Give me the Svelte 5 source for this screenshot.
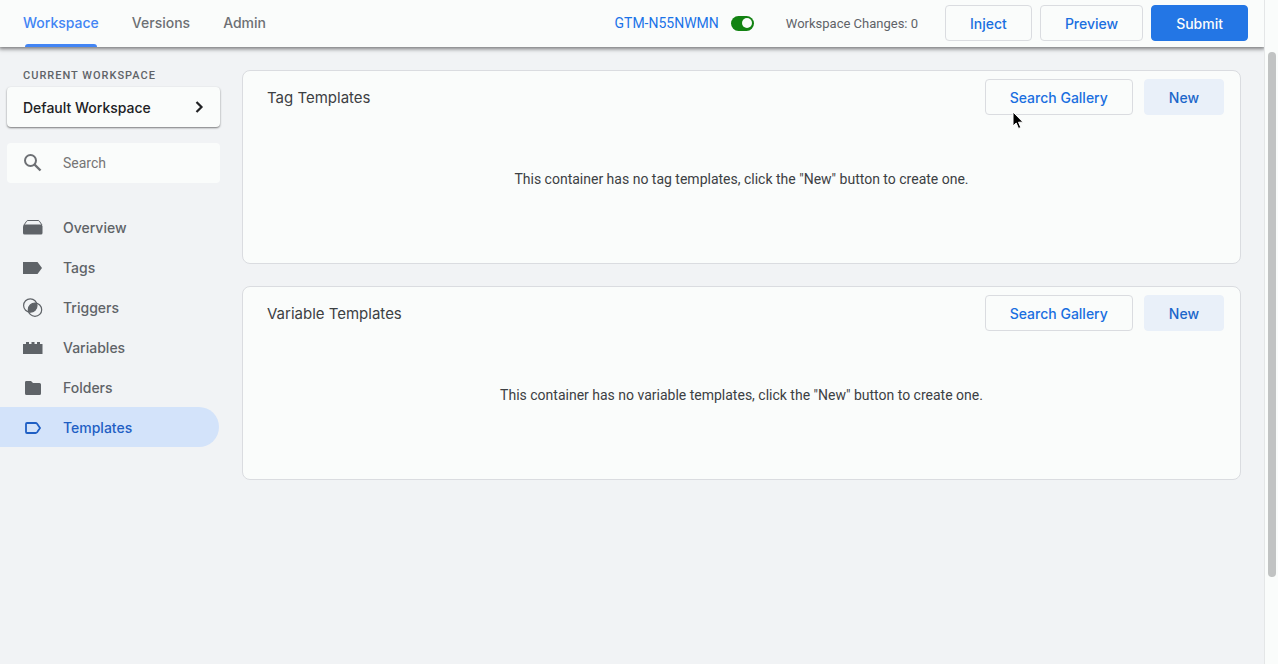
<script>
  let search = $state('');
  let active = $state('Templates');
  let connected = $state(true);

  const tabs = ['Workspace', 'Versions', 'Admin'];

  const navItems = ['Overview', 'Tags', 'Triggers', 'Variables', 'Folders', 'Templates'];

  const sections = [
    { title: 'Tag Templates', kind: 'tag' },
    { title: 'Variable Templates', kind: 'variable' }
  ];
</script>

<div class="page">
  <div class="app">
    <header class="topbar">
      <nav class="tabs">
        {#each tabs as tab, i}
          <a class="tab" class:current={i === 0} href="#{tab.toLowerCase()}">{tab}</a>
        {/each}
      </nav>

      <div class="status">
        <a class="container-id" href="#container">GTM-N55NWMN</a>
        <input class="toggle" type="checkbox" aria-label="Injection enabled" bind:checked={connected} />
        <span class="changes">Workspace Changes: 0</span>
      </div>

      <div class="actions">
        <button class="btn">Inject</button>
        <button class="btn">Preview</button>
        <button class="btn primary">Submit</button>
      </div>
    </header>

    <div class="body">
      <aside class="sidebar">
        <div class="caption">CURRENT WORKSPACE</div>
        <button class="workspace">
          <span>Default Workspace</span>
          <svg width="10" height="14" viewBox="0 0 10 14">
            <path d="M2.500 2l5 5-5 5" fill="none" stroke="currentColor" stroke-width="2.2" />
          </svg>
        </button>

        <label class="search">
          <svg width="20" height="20" viewBox="0 0 20 20">
            <circle cx="7.5" cy="7.5" r="5.5" fill="none" stroke="currentColor" stroke-width="2" />
            <path d="M11.5 11.5l6 6" fill="none" stroke="currentColor" stroke-width="2.4" />
          </svg>
          <input type="text" placeholder="Search" aria-label="Search" bind:value={search} />
        </label>

        <nav class="nav">
          {#each navItems as item}
            <a
              class="nav-item"
              class:active={active === item}
              href="#{item.toLowerCase()}"
              onclick={() => (active = item)}
            >
              <svg width="20" height="20" viewBox="0 0 20 20" fill="currentColor">
                {#if item === 'Overview'}
                  <path d="M1 8L3.6 4.2Q4 3.5 5 3.5h10q1 0 1.4.7L19 8" fill="none" stroke="currentColor" />
                  <path d="M0 9.500Q0 7.500 2 7.500h15.500q2 0 2 2V16q0 1.500-1.500 1.500H1.500Q0 17.500 0 16z" />
                {:else if item === 'Tags'}
                  <path d="M0 5h14.5l4.500 6-4.500 6H0z" />
                {:else if item === 'Triggers'}
                  <circle cx="7.3" cy="8.5" r="6.7" fill="none" stroke="currentColor" stroke-width="1.2" />
                  <circle cx="12" cy="12.7" r="6.7" fill="none" stroke="currentColor" stroke-width="1.2" />
                  <path d="M13.6 6.2A6.7 6.7 0 0 1 5.7 15A6.7 6.7 0 0 1 13.6 6.2z" />
                {:else if item === 'Variables'}
                  <path d="M0 17V7h3V5h3v2h2.500V5h3v2H14V5h3v2h2.500v10z" />
                {:else if item === 'Folders'}
                  <path d="M3 4h5l2 2h6.500A1.500 1.500 0 0 1 18 7.500v9a1.500 1.500 0 0 1-1.500 1.500h-13A1.500 1.500 0 0 1 2 16.500V5.500A1.500 1.500 0 0 1 3 4z" />
                {:else}
                  <path
                    d="M4 6h8.500a2 2 0 0 1 1.600.8L17 11l-2.900 4.200a2 2 0 0 1-1.600.8H4a1 1 0 0 1-1-1V7a1 1 0 0 1 1-1z"
                    fill="none"
                    stroke="currentColor"
                    stroke-width="1.8"
                  />
                {/if}
              </svg>
              <span>{item}</span>
            </a>
          {/each}
        </nav>
      </aside>

      <main class="content">
        {#each sections as section, i}
          <section class="card">
            <div class="card-head">
              <h2>{section.title}</h2>
              <div class="card-actions">
                <button class="btn">Search Gallery</button>
                <button class="btn tonal">New</button>
                {#if i === 0}
                  <svg class="pointer" width="12" height="20" viewBox="0 0 12 20">
                    <path d="M1 1v14l3.200-3 2.300 5.500 2.300-1-2.300-5.300H11z" fill="#000" stroke="#fff" />
                  </svg>
                {/if}
              </div>
            </div>
            <p class="empty">
              This container has no {section.kind} templates, click the "New" button to create one.
            </p>
          </section>
        {/each}
      </main>
    </div>
  </div>

  <div class="scroll-track">
    <div class="scroll-thumb"></div>
  </div>
</div>

<style>
  :global(body) {
    margin: 0;
    background: #f1f3f5;
  }

  .page {
    display: flex;
    min-height: 100vh;
    font-family: Inter, 'Noto Sans', sans-serif;
    font-size: 14px;
    font-weight: 500;
    color: #5f6368;
  }

  .page *,
  .page {
    box-sizing: border-box;
  }

  a {
    color: inherit;
    text-decoration: none;
  }

  .app {
    flex: 1;
    min-width: 0;
  }

  .topbar {
    display: flex;
    align-items: center;
    height: 47px;
    padding: 0 16px 0 23px;
    background: #fafcfb;
    box-shadow: 0 1px 4px 1px rgba(0, 0, 0, 0.5);
  }

  .tabs {
    display: flex;
    align-self: stretch;
    gap: 33px;
    margin-right: auto;
  }

  .tab {
    display: flex;
    flex-direction: column;
    line-height: 46px;
    color: #6d7074;
  }

  .tab.current {
    color: #4285f4;
  }

  .tab.current::after {
    content: '';
    height: 3px;
    margin: -2px 2px 0;
    border-radius: 3px 3px 0 0;
    background: #4285f4;
  }

  .status {
    display: flex;
    align-items: center;
    margin-right: 27px;
    padding-bottom: 1px;
    font-family: Roboto, sans-serif;
    font-weight: 400;
  }

  .container-id {
    color: #1a73e8;
  }

  .changes {
    font-size: 13px;
  }

  .toggle {
    appearance: none;
    display: flex;
    align-items: center;
    width: 23px;
    height: 15px;
    margin: 0 32px 0 12px;
    padding: 0 2px;
    border-radius: 8px;
    background: #9aa0a6;
  }

  .toggle::before {
    content: '';
    width: 10px;
    height: 10px;
    border-radius: 50%;
    background: #fafcfb;
  }

  .toggle:checked {
    justify-content: flex-end;
    background: #128212;
  }

  .actions {
    display: flex;
    gap: 8px;
    padding-bottom: 1px;
  }

  .btn {
    height: 36px;
    padding: 0 24px;
    border: 1px solid #dadce0;
    border-radius: 4px;
    background: #fafcfb;
    color: #1a6fe0;
    font: inherit;
    white-space: nowrap;
  }

  .btn.primary {
    border-color: #2376e5;
    background: #2376e5;
    color: #fafcfb;
  }

  .btn.tonal {
    border-color: #e9f0f9;
    background: #e9f0f9;
    color: #1b66ca;
  }

  .body {
    display: flex;
    gap: 22px;
    padding-right: 23px;
  }

  .sidebar {
    flex: none;
    width: 220px;
    padding-top: 20px;
  }

  .caption {
    padding-left: 23px;
    font-family: Roboto, sans-serif;
    font-size: 11px;
    line-height: 18px;
    letter-spacing: 1px;
  }

  .workspace {
    display: flex;
    align-items: center;
    justify-content: space-between;
    width: 213px;
    height: 40px;
    margin: 2px 0 16px 7px;
    padding: 0 16px;
    border: 0;
    border-radius: 4px;
    background: #fafcfb;
    box-shadow: 0 1px 2px rgba(0, 0, 0, 0.5);
    color: #202124;
    font: inherit;
  }

  .search {
    display: flex;
    align-items: center;
    gap: 20px;
    width: 213px;
    height: 40px;
    margin-left: 7px;
    padding: 0 16px;
    border-radius: 4px;
    background: #fafcfb;
    color: #6d7074;
  }

  .search input {
    min-width: 0;
    flex: 1;
    padding: 0;
    border: 0;
    outline: 0;
    background: none;
    font-family: Roboto, sans-serif;
    font-size: 14px;
    color: #202124;
  }

  .search input::placeholder {
    color: #757575;
  }

  .nav {
    margin-top: 24px;
  }

  .nav-item {
    display: flex;
    align-items: center;
    gap: 20px;
    height: 40px;
    margin-right: 1px;
    padding-left: 23px;
    border-radius: 0 20px 20px 0;
  }

  .nav-item.active {
    background: #d3e3fa;
    color: #1f5fc4;
  }

  .content {
    display: flex;
    flex: 1;
    flex-direction: column;
    gap: 22px;
    min-width: 0;
    padding: 23px 0;
  }

  .card {
    padding: 8px 16px 0;
    border: 1px solid #dadce0;
    border-radius: 8px;
    background: #fafcfb;
  }

  .card-head {
    display: flex;
    align-items: center;
    justify-content: space-between;
    padding-left: 8px;
  }

  h2 {
    margin: 0;
    font-size: 15px;
    font-weight: 400;
    color: #3c4043;
  }

  .card-actions {
    position: relative;
    display: flex;
    gap: 11px;
  }

  .pointer {
    position: absolute;
    top: 32px;
    left: 27px;
  }

  .empty {
    margin: 0;
    padding: 54px 0 74px;
    font-family: Roboto, sans-serif;
    font-weight: 400;
    line-height: 20px;
    text-align: center;
    color: #3c4043;
  }

  .scroll-track {
    flex: none;
    width: 14px;
    padding: 52px 2px 0 3px;
    border-left: 1px solid #e4e6e7;
    background: #fafcfb;
  }

  .scroll-thumb {
    height: 79vh;
    border-radius: 4px;
    background: #c1c3c3;
  }
</style>
